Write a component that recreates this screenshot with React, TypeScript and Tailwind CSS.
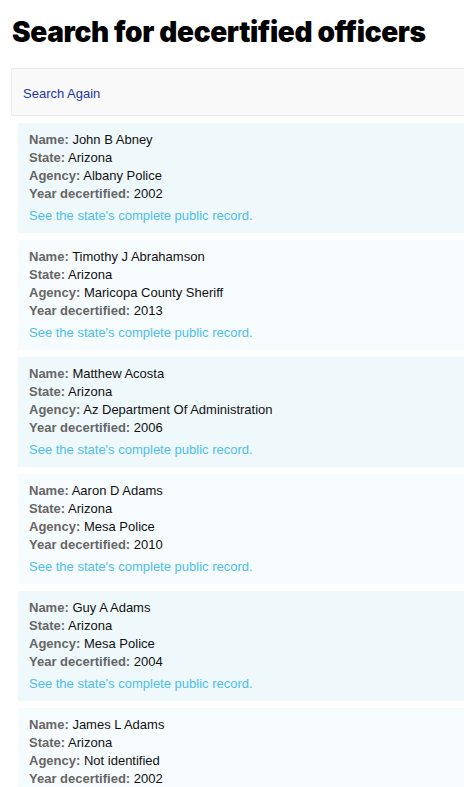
import React from 'react';

interface Officer {
  name: string;
  state: string;
  agency: string;
  year: string;
}

const officers: Officer[] = [
  { name: 'John B Abney', state: 'Arizona', agency: 'Albany Police', year: '2002' },
  { name: 'Timothy J Abrahamson', state: 'Arizona', agency: 'Maricopa County Sheriff', year: '2013' },
  { name: 'Matthew Acosta', state: 'Arizona', agency: 'Az Department Of Administration', year: '2006' },
  { name: 'Aaron D Adams', state: 'Arizona', agency: 'Mesa Police', year: '2010' },
  { name: 'Guy A Adams', state: 'Arizona', agency: 'Mesa Police', year: '2004' },
  { name: 'James L Adams', state: 'Arizona', agency: 'Not identified', year: '2002' },
];

const Field: React.FC<{ label: string; value: string }> = ({ label, value }) => (
  <div className="leading-[18px]">
    <span className="font-bold text-[#666]">{label}:</span>{' '}
    <span className="text-[#111]">{value}</span>
  </div>
);

const OfficerCard: React.FC<{ officer: Officer; odd: boolean }> = ({ officer, odd }) => (
  <div className={`pl-[11px] pt-[8px] pb-[8px] ${odd ? 'bg-[#eff8fb]' : 'bg-[#f6fbfd]'}`}>
    <Field label="Name" value={officer.name} />
    <Field label="State" value={officer.state} />
    <Field label="Agency" value={officer.agency} />
    <Field label="Year decertified" value={officer.year} />
    <a href="#" className="block mt-[4px] leading-[18px] text-[#4cc0ea]">
      See the state's complete public record.
    </a>
  </div>
);

export default function App() {
  return (
    <div className="w-[464px] h-[787px] overflow-hidden bg-white">
      <div className="w-[490px] pl-[11px]">
        <h1 className="pl-[1px] pt-[14px] pb-[17px] text-[28px] leading-[37px] font-black text-black font-['Inter',sans-serif] tracking-[-0.35px]">
          Search for decertified officers
        </h1>
        <div className="h-[48px] flex items-center pl-[11px] pt-[3px] bg-[#f9f9f9] border border-[#ececec] font-['Liberation_Sans',Arial,sans-serif] text-[13px]">
          <a href="#" className="text-[#2236a3]">Search Again</a>
        </div>
        <div className="pl-[7px] pt-[7px] flex flex-col gap-[7px] font-['Liberation_Sans',Arial,sans-serif] text-[13px]">
          {officers.map((o, i) => (
            <OfficerCard key={o.name} officer={o} odd={i % 2 === 0} />
          ))}
        </div>
      </div>
    </div>
  );
}
